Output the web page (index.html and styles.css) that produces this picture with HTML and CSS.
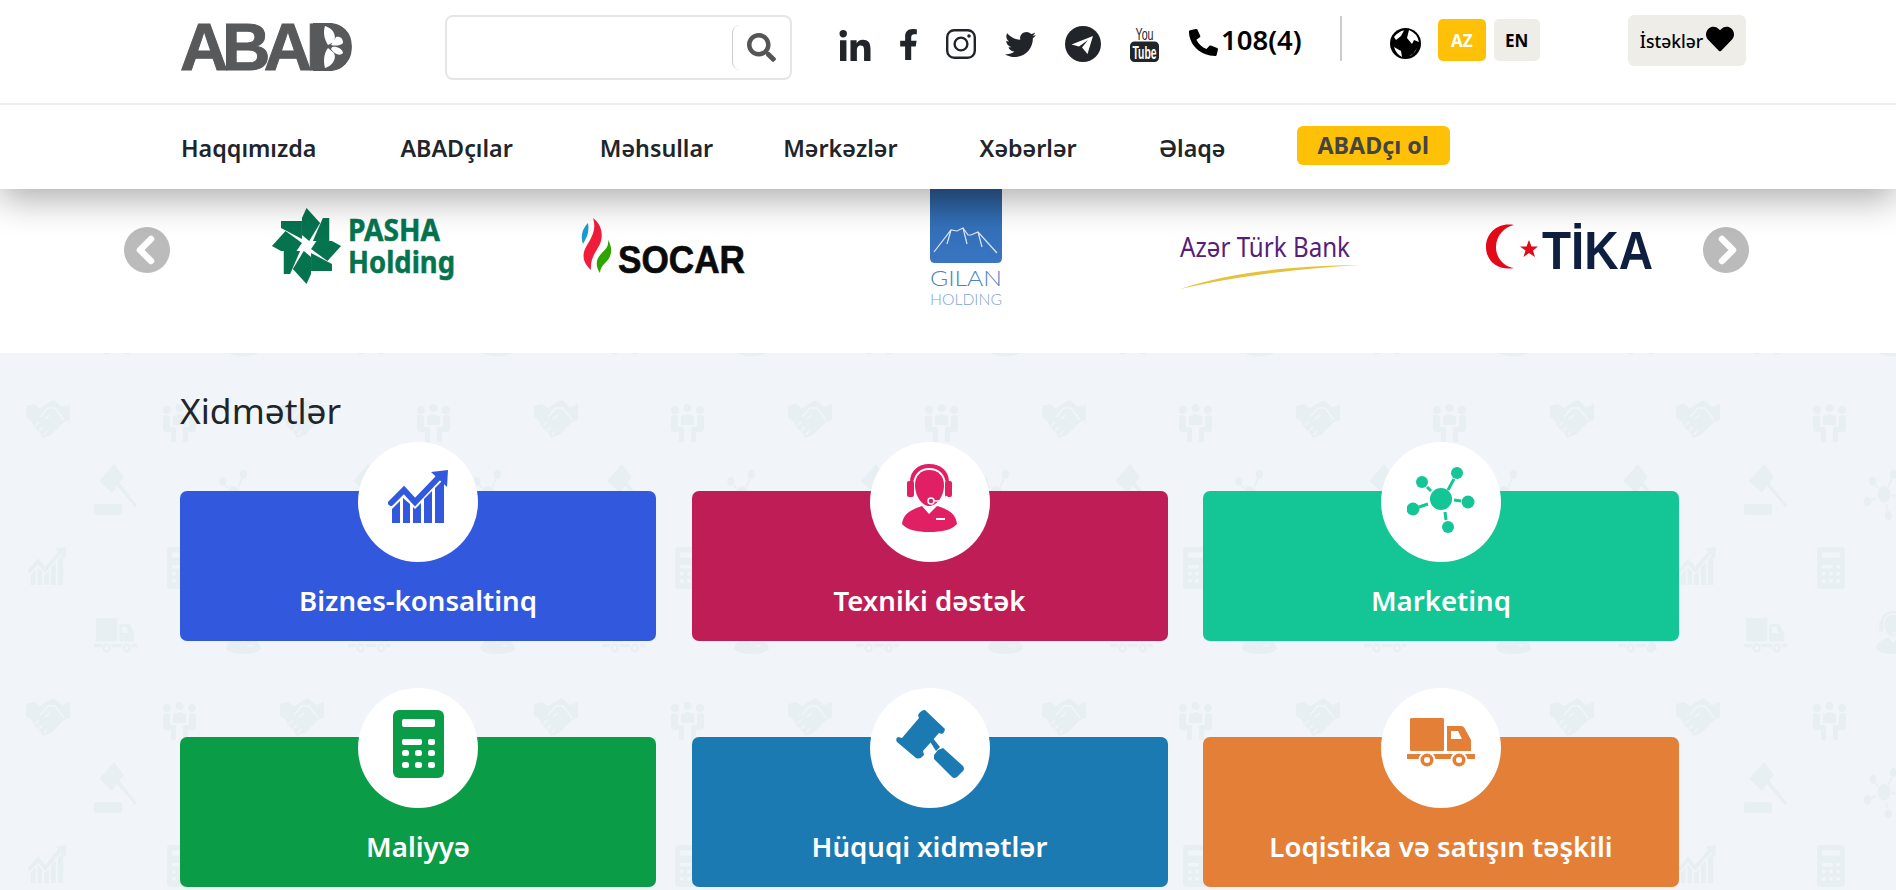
FILE: index.html
```html
<!DOCTYPE html>
<html lang="az">

<head>
  <meta charset="UTF-8">
  <meta name="viewport" content="width=device-width, initial-scale=1.0">
  <link rel="icon" href="data:,">
  <link rel="stylesheet" href="styles.css">
  <title>ABAD</title>
</head>

<body>
  <!-- service icons, used both on the cards and in the section background -->
  <svg class="sprite" aria-hidden="true">
    <symbol id="ic-chart" viewBox="0 0 60 53" preserveAspectRatio="none">
      <path d="M3 33 16 20 27 32 52 6" fill="none" stroke="currentColor" stroke-width="6" stroke-linecap="round" />
      <path d="M43 2 60 0 59 17Z" />
      <path d="M4 39 12 31V53H4ZM15 28 22 34V53H15ZM25 37 27 39 33 33V53H25ZM36 29 44 21V53H36ZM47 18 56 9V53H47Z" />
    </symbol>
    <symbol id="ic-headset" viewBox="0 0 55 69" preserveAspectRatio="none">
      <path d="M0 61C1 50 11 46 20 43L27 51 35 43C45 46 54 50 55 61 50 67 40 69 27 69 15 69 5 67 0 61Z" />
      <path d="M27 1C39 1 47 8 47 19V21H44C43 11 37 5 27 5 18 5 12 11 11 21H8V19C8 8 16 1 27 1Z" />
      <path d="M27 7C36 7 42 13 42 22 42 33 35 43 27 43 20 43 13 33 13 22 13 13 19 7 27 7Z" />
      <rect x="5" y="18" width="7" height="16" rx="2" />
      <rect x="43" y="18" width="7" height="16" rx="2" />
      <path d="M45 33C44 38 38 38 32 38" class="gap-line" />
      <circle cx="29" cy="38" r="3" class="gap-line" />
      <rect x="34" y="55" width="9" height="2" class="gap" />
    </symbol>
    <symbol id="ic-network" viewBox="0 0 68 66" preserveAspectRatio="none">
      <circle cx="34" cy="32" r="11" />
      <circle cx="50" cy="6" r="6" />
      <circle cx="15" cy="15" r="6" />
      <circle cx="61" cy="35" r="6.5" />
      <circle cx="6" cy="42" r="6.5" />
      <circle cx="41" cy="60" r="6" />
      <path d="M47 12 41 23M20 20 24 24M54 34 47 33M12 40 21 37M39 53 38 45" fill="none" stroke="currentColor" stroke-width="3" />
    </symbol>
    <symbol id="ic-calc" viewBox="0 0 51 68" preserveAspectRatio="none">
      <rect width="51" height="68" rx="6" />
      <rect x="9" y="9" width="33" height="8" rx="2" class="gap" />
      <rect x="9" y="29" width="20" height="6" rx="2" class="gap" />
      <rect x="35" y="29" width="7" height="6" rx="2" class="gap" />
      <rect x="9" y="40" width="7" height="6" rx="2.5" class="gap" />
      <rect x="22" y="40" width="7" height="6" rx="2.5" class="gap" />
      <rect x="35" y="40" width="7" height="6" rx="2.5" class="gap" />
      <rect x="9" y="52" width="7" height="6" rx="2.5" class="gap" />
      <rect x="22" y="52" width="7" height="6" rx="2.5" class="gap" />
      <rect x="35" y="52" width="7" height="6" rx="2.5" class="gap" />
    </symbol>
    <symbol id="ic-gavel" viewBox="0 0 68 68" preserveAspectRatio="none">
      <path d="M29 0 49 19Q49 22 46 24L43 23 27 41 28 45Q24 50 20 48L1 32Q-1 29 2 27L6 28 23 8 22 5Q25 0 29 0Z" />
      <path d="M33 30 36 27 44 37 40 41Z" />
      <path d="M42 40 47 38 67 56Q69 59 67 61L61 67Q58 69 56 67L38 49V45Z" />
    </symbol>
    <symbol id="ic-gavel-stand" viewBox="0 0 43 51" preserveAspectRatio="none">
      <path d="M20 0 30 13 18 29 5 17Z" />
      <path d="M22 21 25 18 43 41 41 43Z" />
      <rect y="40" width="28" height="11" rx="2" />
    </symbol>
    <symbol id="ic-truck" viewBox="0 0 68 49" preserveAspectRatio="none">
      <rect x="3" width="34" height="33" rx="1.5" />
      <path d="M40 8H54C56 8 57 9 58 11L64 22V33H40ZM44 13V21H55L51 13Z" fill-rule="evenodd" />
      <rect y="36" width="68" height="5" />
      <circle cx="20" cy="42" r="8.5" class="gap" />
      <circle cx="52" cy="42" r="8.5" class="gap" />
      <circle cx="20" cy="42" r="6.5" />
      <circle cx="52" cy="42" r="6.5" />
      <circle cx="20" cy="42" r="3" class="gap" />
      <circle cx="52" cy="42" r="3" class="gap" />
    </symbol>
    <symbol id="ic-handshake" viewBox="0 0 44 38" preserveAspectRatio="none">
      <path d="M0 6 8 4 14 8 22 3 28 0 36 7 44 4V20L38 22 25 35 17 38 14 33 8 27 5 21 0 18Z" />
      <path d="M14 17 22 8 29 8 38 20M19 19 24 15" class="gap-line" />
      <path d="M9 26 13 22M13 31 17 27M18 35 21 31" class="gap-line" />
    </symbol>
    <symbol id="ic-people" viewBox="0 0 33 39" preserveAspectRatio="none">
      <circle cx="4" cy="7" r="4" />
      <circle cx="16.5" cy="5" r="4" />
      <circle cx="29" cy="7" r="4" />
      <path d="M0 14Q0 12 3 12 7 12 7 15V24H11Q13 24 13 26V39H8V29H3Q0 29 0 26Z" />
      <path d="M33 14Q33 12 30 12 26 12 26 15V24H22Q20 24 20 26V39H25V29H30Q33 29 33 26Z" />
      <path d="M10 13 16 11 23 13V22H10Z" />
    </symbol>
  </svg>

  <header class="site-header">
    <div class="topbar">
      <a class="logo" href="#">ABAD
        <svg class="logo-leaf" viewBox="0 0 38 48" aria-hidden="true">
          <path d="M0 0H16C30 0 38 10 38 24 38 38 30 48 16 48H0Z" />
          <g class="logo-leaf-white" transform="translate(9 2)">
            <path d="M3 1C10 3 15 9 12 17L6 20C2 14 1 7 3 1Z" />
            <path d="M14 12C18 11 21 13 21 18 18 21 13 21 9 20Z" />
            <path d="M10 22C14 21 20 23 21 28 18 31 13 30 9 24Z" />
            <path d="M6 23 12 28C15 34 10 41 3 43 1 36 2 28 6 23Z" />
          </g>
        </svg>
      </a>

      <form class="search">
        <input class="search-input" type="text" aria-label="Axtar">
        <button class="search-btn" type="button" aria-label="Axtar">
          <svg viewBox="0 0 512 512"><path d="M505 442.7L405.3 343c-4.5-4.5-10.6-7-17-7H372c27.6-35.3 44-79.7 44-128C416 93.1 322.9 0 208 0S0 93.1 0 208s93.1 208 208 208c48.3 0 92.7-16.4 128-44v16.3c0 6.4 2.5 12.5 7 17l99.7 99.7c9.4 9.4 24.6 9.4 33.9 0l28.3-28.3c9.4-9.4 9.4-24.6.1-34zM208 336c-70.7 0-128-57.2-128-128 0-70.7 57.2-128 128-128 70.7 0 128 57.2 128 128 0 70.7-57.2 128-128 128z" /></svg>
        </button>
      </form>

      <div class="socials">
        <a href="#" aria-label="LinkedIn">
          <svg class="ic-linkedin" viewBox="0 0 448 448"><path d="M100.28 448H7.4V148.9h92.88zM53.79 108.1C24.09 108.1 0 83.5 0 53.8a53.79 53.79 0 0 1 107.58 0c0 29.7-24.1 54.3-53.79 54.3zM447.9 448h-92.68V302.4c0-34.7-.7-79.2-48.29-79.2-48.29 0-55.69 37.7-55.69 76.7V448h-92.78V148.9h89.08v40.8h1.3c12.4-23.5 42.69-48.3 87.88-48.3 94 0 111.28 61.9 111.28 142.3V448z" /></svg>
        </a>
        <a href="#" aria-label="Facebook">
          <svg class="ic-facebook" viewBox="20 0 280 512"><path d="M279.14 288l14.22-92.66h-88.91v-60.13c0-25.35 12.42-50.06 52.24-50.06h40.42V6.26S260.43 0 225.36 0c-73.22 0-121.08 44.38-121.08 124.72v70.62H22.89V288h81.39v224h100.17V288z" /></svg>
        </a>
        <a href="#" aria-label="Instagram">
          <svg class="ic-instagram" viewBox="0 0 30 30">
            <rect x="1.2" y="1.2" width="27.6" height="27.6" rx="7" fill="none" stroke="currentColor" stroke-width="2.4" />
            <circle cx="15" cy="15" r="6.4" fill="none" stroke="currentColor" stroke-width="2.4" />
            <circle cx="23" cy="7" r="1.8" />
          </svg>
        </a>
        <a href="#" aria-label="Twitter">
          <svg class="ic-twitter" viewBox="0 48 512 416" preserveAspectRatio="none"><path d="M459.37 151.716c.325 4.548.325 9.097.325 13.645 0 138.72-105.583 298.558-298.558 298.558-59.452 0-114.68-17.219-161.137-47.106 8.447.974 16.568 1.299 25.34 1.299 49.055 0 94.213-16.568 130.274-44.832-46.132-.975-84.792-31.188-98.112-72.772 6.498.974 12.995 1.624 19.818 1.624 9.421 0 18.843-1.3 27.614-3.573-48.081-9.747-84.143-51.98-84.143-102.985v-1.299c13.969 7.797 30.214 12.67 47.431 13.319-28.264-18.843-46.781-51.005-46.781-87.391 0-19.492 5.197-37.36 14.294-52.954 51.655 63.675 129.3 105.258 216.365 109.807-1.624-7.797-2.599-15.918-2.599-24.04 0-57.828 46.782-104.934 104.934-104.934 30.213 0 57.502 12.67 76.67 33.137 23.715-4.548 46.456-13.32 66.599-25.34-7.798 24.366-24.366 44.833-46.132 57.827 21.117-2.273 41.584-8.122 60.426-16.243-14.292 20.791-32.161 39.308-52.628 54.253z" /></svg>
        </a>
        <a href="#" aria-label="Telegram">
          <svg class="ic-telegram" viewBox="0 0 36 36">
            <circle cx="18" cy="18" r="18" />
            <path d="M6.5 18.5 28 10 22.500 28 17 21.500 23 14 14 20.500Z" fill="#fff" />
          </svg>
        </a>
        <a href="#" aria-label="YouTube">
          <svg class="ic-youtube" viewBox="0 0 29 35">
            <text x="5.500" y="12.500" class="yt-you" textLength="18" lengthAdjust="spacingAndGlyphs">You</text>
            <rect y="14.500" width="29" height="20.500" rx="4.500" />
            <text x="2.500" y="31.500" class="yt-tube" textLength="24" lengthAdjust="spacingAndGlyphs">Tube</text>
          </svg>
        </a>
      </div>

      <a class="hotline" href="#">
        <svg viewBox="0 0 512 512" preserveAspectRatio="none"><path transform="matrix(-1 0 0 1 512 0)" d="M493.4 24.6l-104-24c-11.3-2.6-22.9 3.3-27.5 13.9l-48 112c-4.2 9.8-1.4 21.3 6.9 28l60.6 49.6c-36 76.7-98.9 140.5-177.2 177.2l-49.6-60.6c-6.8-8.3-18.2-11.1-28-6.9l-112 48C3.9 366.5-2 378.1.6 389.4l24 104C27.1 504.2 36.7 512 48 512c256.1 0 464-207.5 464-464 0-11.2-7.7-20.9-18.6-23.4z" /></svg>
        <span>108(4)</span>
      </a>

      <span class="topbar-divider"></span>

      <svg class="globe" viewBox="0 0 31 31" aria-hidden="true">
        <circle cx="15.500" cy="15.500" r="15.500" />
        <path d="M4 9Q9 3 14 2.500L11 8 6 12ZM19 2Q27 5 29 14L24 12 22 16 17 10ZM4 19 11 23 12 29Q6 26 4 19ZM27 20 23 26 19 28Q24 27 27 20Z" fill="#fff" />
      </svg>
      <a class="lang lang-active" href="#">AZ</a>
      <a class="lang" href="#">EN</a>

      <a class="wishlist" href="#">
        <span>İstəklər</span>
        <svg viewBox="0 0 512 512"><path d="M462.3 62.6C407.5 15.9 326 24.3 275.7 76.2L256 96.5l-19.7-20.3C186.1 24.3 104.5 15.9 49.7 62.6c-62.8 53.6-66.1 149.8-9.9 207.9l193.5 199.8c12.5 12.9 32.8 12.9 45.3 0l193.5-199.8c56.3-58.1 53-154.3-9.8-207.9z" /></svg>
      </a>
    </div>

    <nav class="mainnav">
      <a href="#">Haqqımızda</a>
      <a href="#">ABADçılar</a>
      <a class="nav-wide" href="#">Məhsullar</a>
      <a class="nav-tight" href="#">Mərkəzlər</a>
      <a href="#">Xəbərlər</a>
      <a href="#">Əlaqə</a>
      <a class="nav-cta" href="#">ABADçı ol</a>
    </nav>
  </header>

  <section class="partners">
    <button class="arrow" type="button" aria-label="Geri">
      <svg viewBox="0 0 46 46"><circle cx="23" cy="23" r="23" /><path d="M27 12 16 23 27 34" /></svg>
    </button>

    <svg class="partner partner-pasha" viewBox="0 0 183 76" aria-label="PASHA Holding">
      <g fill="#06734f" transform="translate(34.500 38) scale(.91 1)">
        <g id="pasha-arm">
          <path d="M0-38 15-23 3-5-5-11V-28Z" />
          <path d="M18-28H25V-5H7Z" />
        </g>
        <use href="#pasha-arm" transform="rotate(90)" />
        <use href="#pasha-arm" transform="rotate(180)" />
        <use href="#pasha-arm" transform="rotate(270)" />
      </g>
      <text x="76" y="33" class="pasha-text" textLength="92" lengthAdjust="spacingAndGlyphs">PASHA</text>
      <text x="76" y="65" class="pasha-text" textLength="107" lengthAdjust="spacingAndGlyphs">Holding</text>
    </svg>

    <svg class="partner partner-socar" viewBox="0 0 164 56" aria-label="SOCAR">
      <path d="M7 5C2 10-1 17 2 26 4 22 9 16 7 5Z" fill="#1a9ad6" />
      <path d="M12 0C20 6 23 16 19 26 15 34 9 40 10 52 3 46 0 38 5 29 10 20 16 12 12 0Z" fill="#ef1c3c" />
      <path d="M27 22C32 30 31 38 25 44 21 48 19 51 19 55 14 48 15 41 20 36 24 32 28 29 27 22Z" fill="#2da400" />
      <text x="37" y="55" class="socar-text" textLength="127" lengthAdjust="spacingAndGlyphs">SOCAR</text>
    </svg>

    <svg class="partner partner-gilan" viewBox="0 0 72 117" aria-label="GILAN Holding">
      <defs>
        <linearGradient id="gilan-bg" x1="0" y1="0" x2="0" y2="1">
          <stop offset="0" stop-color="#2b5a92" />
          <stop offset=".5" stop-color="#3470b9" />
          <stop offset="1" stop-color="#3975c0" />
        </linearGradient>
      </defs>
      <path d="M0 0H72V69Q72 74 67 74H5Q0 74 0 69Z" fill="url(#gilan-bg)" />
      <path d="M4 63 21 41 27 42 33 39 38 46 41 46 48 43 67 64M33 39 37 55M48 43 52 58M21 41 17 55" fill="none" stroke="#dbe7f4" stroke-width="1.2" />
      <text x="0" y="97" class="gilan-name" textLength="72" lengthAdjust="spacingAndGlyphs">GILAN</text>
      <text x="0" y="116" class="gilan-sub" textLength="72" lengthAdjust="spacingAndGlyphs">HOLDING</text>
    </svg>

    <svg class="partner partner-azer" viewBox="0 0 180 54" aria-label="Azər Türk Bank">
      <text x="0" y="22" class="azer-text" textLength="170" lengthAdjust="spacingAndGlyphs">Azər Türk Bank</text>
      <path d="M0 54C50 37 110 31 180 30 110 34 50 43 0 54Z" fill="#e6c13b" />
    </svg>

    <svg class="partner partner-tika" viewBox="0 0 167 50" aria-label="TİKA">
      <path d="M28 4C12 1 0 12 0 26 0 40 12 50 28 47 18 46 10 37 10 26 10 15 18 6 28 4Z" fill="#e30a17" />
      <path d="M43 19 45.500 25.500 52 25.500 47 29.500 49 36 43 32 37.500 36 39.500 29.500 34 25.500 40.500 25.500Z" fill="#e30a17" />
      <text x="56" y="48" class="tika-text" textLength="111" lengthAdjust="spacingAndGlyphs">TİKA</text>
    </svg>

    <button class="arrow arrow-next" type="button" aria-label="İrəli">
      <svg viewBox="0 0 46 46"><circle cx="23" cy="23" r="23" /><path d="M19 12 30 23 19 34" /></svg>
    </button>
  </section>

  <main class="services">
    <svg class="services-bg" width="1896" height="537" aria-hidden="true">
      <defs>
        <pattern id="bg-cell" x="20" y="3" width="254" height="298" patternUnits="userSpaceOnUse">
          <g class="bg-icons">
            <use href="#ic-handshake" x="6" y="44" width="44" height="38" />
            <use href="#ic-people" x="143" y="47" width="33" height="39" />
            <use href="#ic-gavel-stand" x="74" y="108" width="43" height="51" />
            <use href="#ic-network" x="194" y="114" width="40" height="50" />
            <use href="#ic-chart" x="8" y="191" width="38" height="38" />
            <use href="#ic-calc" x="147" y="191" width="28" height="42" />
            <use href="#ic-truck" x="74" y="262" width="43" height="35" />
            <use href="#ic-headset" x="206" y="254" width="35" height="44" />
          </g>
        </pattern>
      </defs>
      <rect x="8" width="1642" height="537" fill="url(#bg-cell)" />
      <g transform="translate(1650 0)">
        <rect width="246" height="537" fill="url(#bg-cell)" />
      </g>
    </svg>

    <h2 class="services-title">Xidmətlər</h2>

    <div class="service-grid">
      <a class="service service-blue" href="#">
        <span class="badge"><svg class="icon-chart"><use href="#ic-chart" /></svg></span>
        <span class="service-name">Biznes-konsaltinq</span>
      </a>
      <a class="service service-crimson" href="#">
        <span class="badge"><svg class="icon-headset"><use href="#ic-headset" /></svg></span>
        <span class="service-name">Texniki dəstək</span>
      </a>
      <a class="service service-teal" href="#">
        <span class="badge"><svg class="icon-network"><use href="#ic-network" /></svg></span>
        <span class="service-name">Marketinq</span>
      </a>
      <a class="service service-green" href="#">
        <span class="badge"><svg class="icon-calc"><use href="#ic-calc" /></svg></span>
        <span class="service-name">Maliyyə</span>
      </a>
      <a class="service service-sea" href="#">
        <span class="badge"><svg class="icon-gavel"><use href="#ic-gavel" /></svg></span>
        <span class="service-name">Hüquqi xidmətlər</span>
      </a>
      <a class="service service-orange" href="#">
        <span class="badge"><svg class="icon-truck"><use href="#ic-truck" /></svg></span>
        <span class="service-name">Loqistika və satışın təşkili</span>
      </a>
    </div>
  </main>
</body>

</html>
```

FILE: styles.css
```css
* {
  box-sizing: border-box;
}

body {
  margin: 0;
  font-family: "Noto Sans", "Open Sans", sans-serif;
  color: #212529;
  background: #fff;
  overflow-x: hidden;
}

a {
  color: inherit;
  text-decoration: none;
}

svg {
  display: block;
  fill: currentColor;
}

.sprite {
  position: absolute;
  width: 0;
  height: 0;
}

.gap {
  fill: var(--gap, #fff);
}

.gap-line {
  fill: none;
  stroke: var(--gap, #fff);
  stroke-width: 1.5;
}

/* header */
.site-header {
  position: relative;
  z-index: 2;
  background: #fff;
  box-shadow: 0 10px 34px rgb(0 0 0 / 33%);
}

.topbar {
  display: flex;
  align-items: flex-start;
  height: 105px;
  padding-left: 180px;
  border-bottom: 2px solid #eee;
}

.logo {
  position: relative;
  width: 171px;
  margin-top: 11px;
  font-family: "Liberation Sans", Arial, sans-serif;
  font-size: 67px;
  font-weight: 700;
  line-height: 72px;
  letter-spacing: -6.500px;
  color: #58595b;
  -webkit-text-stroke: 1px #58595b;
}

.logo-leaf {
  position: absolute;
  top: 12px;
  left: 133px;
  width: 38px;
  height: 48px;
  fill: #58595b;
}

.logo-leaf-white {
  fill: #fff;
}

.search {
  display: flex;
  align-items: center;
  width: 347px;
  height: 65px;
  margin: 15px 0 0 94px;
  padding: 0 14px 0 0;
  border: 2px solid #e6e6e6;
  border-radius: 8px;
}

.search-input {
  flex: 1;
  min-width: 0;
  height: 100%;
  border: 0;
  background: none;
}

.search-btn {
  width: 44px;
  height: 45px;
  padding: 0 0 0 14px;
  border: 0;
  border-left: 1px solid #ccc;
  border-radius: 8px 0 0 8px;
  background: none;
  color: #555;
}

.search-btn svg {
  width: 29px;
  height: 29px;
}

.socials {
  display: flex;
  align-items: center;
  gap: 29px;
  margin: 26px 0 0 47px;
  height: 36px;
}

.ic-linkedin {
  width: 32px;
  height: 31px;
  margin-top: 2px;
}

.ic-facebook {
  width: 17px;
  height: 33px;
}

.ic-instagram {
  width: 30px;
  height: 30px;
}

.ic-twitter {
  width: 31px;
  height: 25px;
}

.ic-telegram {
  width: 36px;
  height: 36px;
}

.ic-youtube {
  width: 29px;
  height: 35px;
  overflow: visible;
}

.yt-you,
.yt-tube {
  font-family: "Liberation Sans", Arial, sans-serif;
  font-size: 16px;
}

.yt-tube {
  font-weight: 700;
  font-size: 18px;
  fill: #fff;
}

.hotline {
  display: flex;
  align-items: flex-start;
  gap: 3px;
  margin: 28px 0 0 30px;
  font-size: 27.500px;
  font-weight: 600;
  line-height: 24px;
  color: #000;
}

.hotline svg {
  width: 29px;
  height: 27px;
  margin-top: 1px;
}

.topbar-divider {
  width: 2px;
  height: 45px;
  margin: 16px 0 0 38px;
  background: #ccc;
}

.globe {
  width: 31px;
  height: 31px;
  margin: 28px 0 0 48px;
  fill: #000;
}

.lang {
  display: flex;
  align-items: center;
  justify-content: center;
  width: 46px;
  height: 42px;
  margin: 19px 0 0 8px;
  border-radius: 5px;
  background: #efede7;
  font-size: 17px;
  font-weight: 700;
  color: #000;
}

.lang-active {
  width: 48px;
  margin-left: 17px;
  background: #ffc107;
  color: #fff;
}

.wishlist {
  display: flex;
  align-items: center;
  gap: 3px;
  width: 118px;
  height: 51px;
  margin: 15px 0 0 88px;
  padding-left: 12px;
  border-radius: 6px;
  background: #efede7;
  font-size: 17.500px;
  font-weight: 500;
  color: #000;
}

.wishlist svg {
  width: 28px;
  height: 28px;
  margin-top: -4px;
}

.mainnav {
  display: flex;
  align-items: center;
  gap: 82px;
  height: 84px;
  padding: 1px 0 0 181px;
  font-size: 23.300px;
  font-weight: 600;
}

.mainnav a:nth-child(2) {
  margin-left: 2px;
}

.nav-wide {
  margin-left: 5px;
}

.nav-tight {
  margin-left: -12px;
}

.nav-cta {
  height: 39px;
  margin: 0 0 5px -11px;
  padding: 0 21px;
  border-radius: 6px;
  background: #ffc107;
  font-weight: 700;
  line-height: 39px;
  color: #444;
}

/* partner logos */
.partners {
  display: flex;
  align-items: flex-start;
  height: 164px;
  padding-left: 124px;
  background: #fff;
}

.arrow {
  width: 46px;
  height: 46px;
  margin-top: 38px;
  padding: 0;
  border: 0;
  background: none;
}

.arrow svg {
  fill: #bbb;
}

.arrow path {
  fill: none;
  stroke: #fff;
  stroke-width: 6.5;
  stroke-linecap: round;
  stroke-linejoin: round;
}

.arrow-next {
  margin-left: 50px;
}

.partner {
  overflow: visible;
}

.partner-pasha {
  width: 183px;
  height: 76px;
  margin: 19px 0 0 102px;
}

.pasha-text {
  font-family: "Noto Sans", sans-serif;
  font-size: 30px;
  font-weight: 700;
  fill: #06734f;
  stroke: #06734f;
  stroke-width: .5;
}

.partner-socar {
  width: 164px;
  height: 56px;
  margin: 29px 0 0 126px;
}

.socar-text {
  font-family: "Liberation Sans", Arial, sans-serif;
  font-size: 39px;
  font-weight: 700;
  fill: #0b0b0b;
  stroke: #0b0b0b;
  stroke-width: .7;
}

.partner-gilan {
  width: 72px;
  height: 117px;
  margin-left: 185px;
}

.gilan-name,
.gilan-sub {
  font-family: Lato, "Liberation Sans", sans-serif;
  font-weight: 300;
}

.gilan-name {
  font-size: 21px;
  fill: #4b82c4;
}

.gilan-sub {
  font-size: 15px;
  fill: #7da5d8;
}

.partner-azer {
  width: 180px;
  height: 54px;
  margin: 46px 0 0 178px;
}

.azer-text {
  font-family: "Noto Sans", sans-serif;
  font-size: 27px;
  fill: #55207a;
}

.partner-tika {
  width: 167px;
  height: 50px;
  margin: 32px 0 0 126px;
}

.tika-text {
  font-family: "Liberation Sans", Arial, sans-serif;
  font-size: 53px;
  font-weight: 700;
  fill: #0e1f3f;
}

/* services */
.services {
  position: relative;
  height: 537px;
  padding: 33px 0 0 180px;
  background: #f1f5fa;
  overflow: hidden;
}

.services-bg {
  position: absolute;
  top: 0;
  left: 0;
}

.bg-icons {
  --gap: #f1f5fa;
  color: #e8eff3;
}

.services-title {
  position: relative;
  margin: 0;
  font-size: 35.400px;
  font-weight: 400;
  line-height: 48px;
}

.service-grid {
  position: relative;
  display: grid;
  grid-template-columns: repeat(3, 476px);
  gap: 96px 35.500px;
  margin-top: 57px;
}

.service {
  display: flex;
  flex-direction: column;
  align-items: center;
  height: 150px;
  border-radius: 7px;
  color: #fff;
}

.badge {
  display: flex;
  justify-content: center;
  flex: none;
  width: 120px;
  height: 120px;
  margin-top: -49px;
  border-radius: 50%;
  background: #fff;
}

.service-name {
  margin-top: 18px;
  font-size: 27.600px;
  font-weight: 600;
  line-height: 40px;
}

.service-blue {
  background: #3259dd;
}

.service-crimson {
  background: #be1d56;
}

.service-teal {
  background: #14c596;
}

.service-green {
  background: #0a9c47;
}

.service-sea {
  background: #1a7ab1;
}

.service-orange {
  background: #e47f37;
}

.icon-chart {
  width: 60px;
  height: 53px;
  margin-top: 28px;
  color: #3259dd;
}

.icon-headset {
  width: 55px;
  height: 69px;
  margin-top: 21px;
  color: #e11f63;
}

.icon-network {
  width: 68px;
  height: 66px;
  margin-top: 25px;
  color: #14c596;
}

.icon-calc {
  width: 51px;
  height: 68px;
  margin-top: 22px;
  color: #0a9c47;
}

.icon-gavel {
  width: 68px;
  height: 68px;
  margin-top: 22px;
  color: #1a7ab1;
}

.icon-truck {
  width: 68px;
  height: 49px;
  margin-top: 30px;
  color: #e47f37;
}
```
